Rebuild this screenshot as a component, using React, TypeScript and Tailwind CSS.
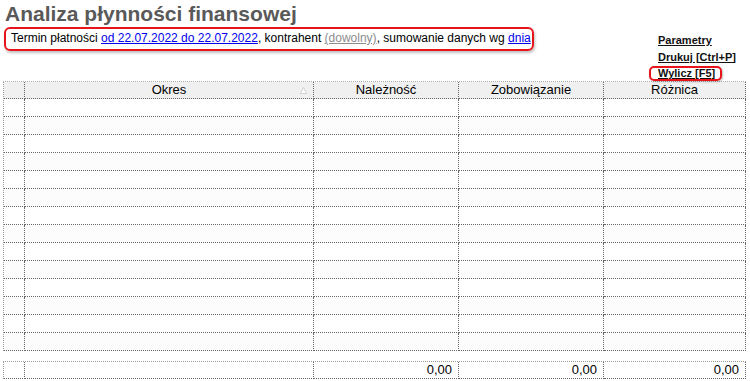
import React from "react";

const cols = ["w-[21px]", "w-[289px]", "w-[145px]", "w-[145px]", "w-[142px]"];
const headers = ["", "Okres", "Należność", "Zobowiązanie", "Różnica"];
const rows = Array.from({ length: 14 }, (_, i) => i);

function SortMark() {
  return (
    <svg width="7" height="7" viewBox="0 0 7 7" className="absolute right-[6px] top-[5px]">
      <path d="M3.5 0.5 L6.5 6.5 L0.5 6.5 Z" fill="#ffffff" stroke="#c8c8c8" strokeWidth="0.8" />
    </svg>
  );
}

export default function App() {
  return (
    <div className="relative w-[750px] h-[381px] overflow-hidden bg-white font-['Liberation_Sans',Arial,sans-serif] text-black">
      {/* Nagłówek */}
      <div className="flex h-[81px] justify-between">
        <div className="pl-[4px]">
          <h1 className="pl-[1px] pt-[2px] text-[21px] leading-[24px] font-bold text-[#595959]">
            Analiza płynności finansowej
          </h1>
          <div className="mt-[1px] w-[530px] h-[24px] rounded-[6px] border-2 border-[#e8141b] shadow-[1px_2px_3px_rgba(0,0,0,0.25)] pl-[5px] text-[12px] leading-[19px]">
            Termin płatności{" "}
            <a className="text-[#0000ee] underline">od 22.07.2022 do 22.07.2022</a>
            , kontrahent <a className="text-[#8c8c8c] underline">(dowolny)</a>, sumowanie danych wg{" "}
            <a className="text-[#0000ee] underline">dnia</a>
          </div>
        </div>

        <div className="w-[101px] pt-[32px] text-[11px] font-bold leading-[16.5px] text-[#111]">
          <div className="pl-[9px] underline">Parametry</div>
          <div className="pl-[9px] underline">Drukuj [Ctrl+P]</div>
          <div className="inline-block h-[15px] rounded-[5px] border-2 border-[#e8141b] shadow-[1px_1px_2px_rgba(0,0,0,0.25)] pl-[7px] pr-[5px] leading-[11px] underline">
            Wylicz [F5]
          </div>
        </div>
      </div>

      {/* Tabela */}
      <div className="ml-[3px] w-fit border-l border-t border-dotted border-l-[#999] border-t-[#aaa] text-[13px]">
        <div className="flex bg-[#f0f0f0]">
          {headers.map((h, i) => (
            <div
              key={i}
              className={`${cols[i]} relative h-[17px] border-r border-b border-dotted border-[#666] text-center leading-[16px]`}
            >
              {h}
              {i === 1 && <SortMark />}
            </div>
          ))}
        </div>
        {rows.map((r) => (
          <div key={r} className={`flex ${r % 2 === 1 ? "bg-[#fcfcfc]" : "bg-white"}`}>
            {cols.map((c, i) => (
              <div key={i} className={`${c} h-[18px] border-r border-b border-dotted border-[#666]`} />
            ))}
          </div>
        ))}
      </div>

      {/* Podsumowanie */}
      <div className="ml-[3px] mt-[10px] flex w-fit border-l border-t border-dotted border-l-[#999] border-t-[#999] text-[13px]">
        {cols.map((c, i) => (
          <div
            key={i}
            className={`${c} h-[17px] border-r border-b border-dotted border-[#666] pr-[6px] text-right leading-[16px]`}
          >
            {i >= 2 ? "0,00" : ""}
          </div>
        ))}
      </div>
    </div>
  );
}
